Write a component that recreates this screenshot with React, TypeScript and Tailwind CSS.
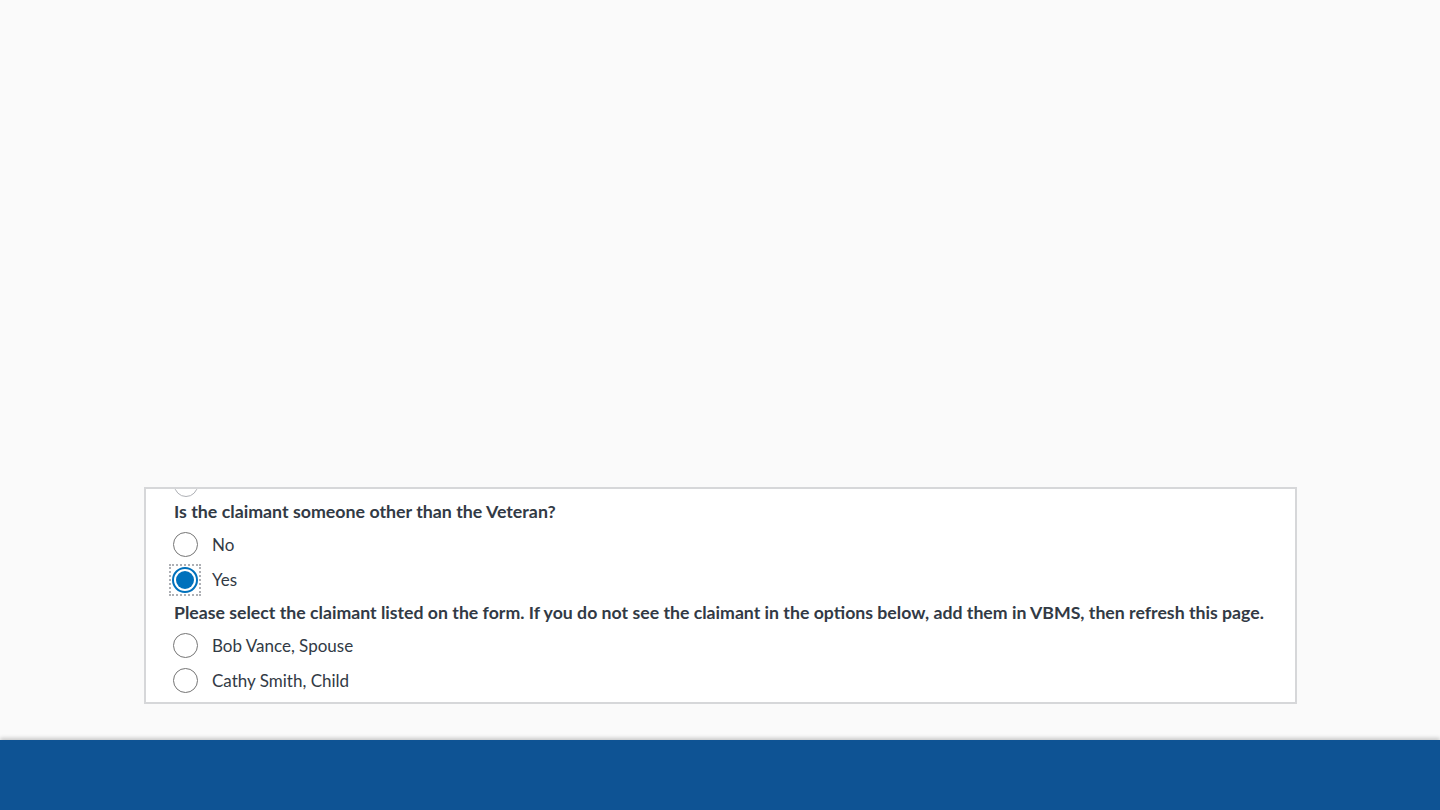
import React from 'react';

function Radio({ checked, focused }: { checked?: boolean; focused?: boolean }) {
  return (
    <span
      className={
        'flex h-[30px] w-[30px] shrink-0 items-center justify-center ' +
        (focused ? 'outline-2 outline-dotted outline-[#aeb0b5] -outline-offset-1' : '')
      }
    >
      {checked ? (
        <span className="flex h-[26px] w-[26px] items-center justify-center rounded-full border-2 border-[#0071bc] bg-white">
          <span className="h-[18px] w-[18px] rounded-full bg-[#0071bc]" />
        </span>
      ) : (
        <span className="h-[25px] w-[25px] rounded-full border-[1.5px] border-[#757575] bg-white" />
      )}
    </span>
  );
}

function Option({ label, checked, focused }: { label: string; checked?: boolean; focused?: boolean }) {
  return (
    <label className="flex h-[35px] items-center gap-[12px]">
      <Radio checked={checked} focused={focused} />
      <span className="text-[17px] text-[#323a45]">{label}</span>
    </label>
  );
}

export default function App() {
  return (
    <div
      className="flex min-h-[810px] flex-col bg-[#fafafa]"
      style={{ fontFamily: 'Lato, "Noto Sans", sans-serif' }}
    >
      <div className="flex flex-1 flex-col justify-end pl-[144px] pr-[143px] pb-[36px]">
        <div className="h-[217px] overflow-hidden border-2 border-[#d6d7d9] bg-white pl-[24px] pr-[28px]">
          <div className="-mt-[16px] h-[18px]">
            <span className="ml-[4px] block h-[24px] w-[24px] rounded-full border-[1.5px] border-[#aeb0b5]" />
          </div>
          <h3 className="ml-[4px] mt-[7px] text-[17.8px] font-bold leading-[26px] text-[#323a45]">
            Is the claimant someone other than the Veteran?
          </h3>
          <div className="mt-[3px] flex flex-col">
            <Option label="No" />
            <Option label="Yes" checked focused />
          </div>
          <h3 className="ml-[4px] mt-[3px] whitespace-nowrap text-[17.7px] font-bold leading-[26px] text-[#323a45]">
            Please select the claimant listed on the form. If you do not see the claimant in the options below, add them in VBMS, then refresh this page.
          </h3>
          <div className="mt-[2px] flex flex-col">
            <Option label="Bob Vance, Spouse" />
            <Option label="Cathy Smith, Child" />
          </div>
        </div>
      </div>
      <footer className="h-[70px] bg-[#0e5394] shadow-[0_-2px_4px_rgba(0,0,0,0.2)]" />
    </div>
  );
}
